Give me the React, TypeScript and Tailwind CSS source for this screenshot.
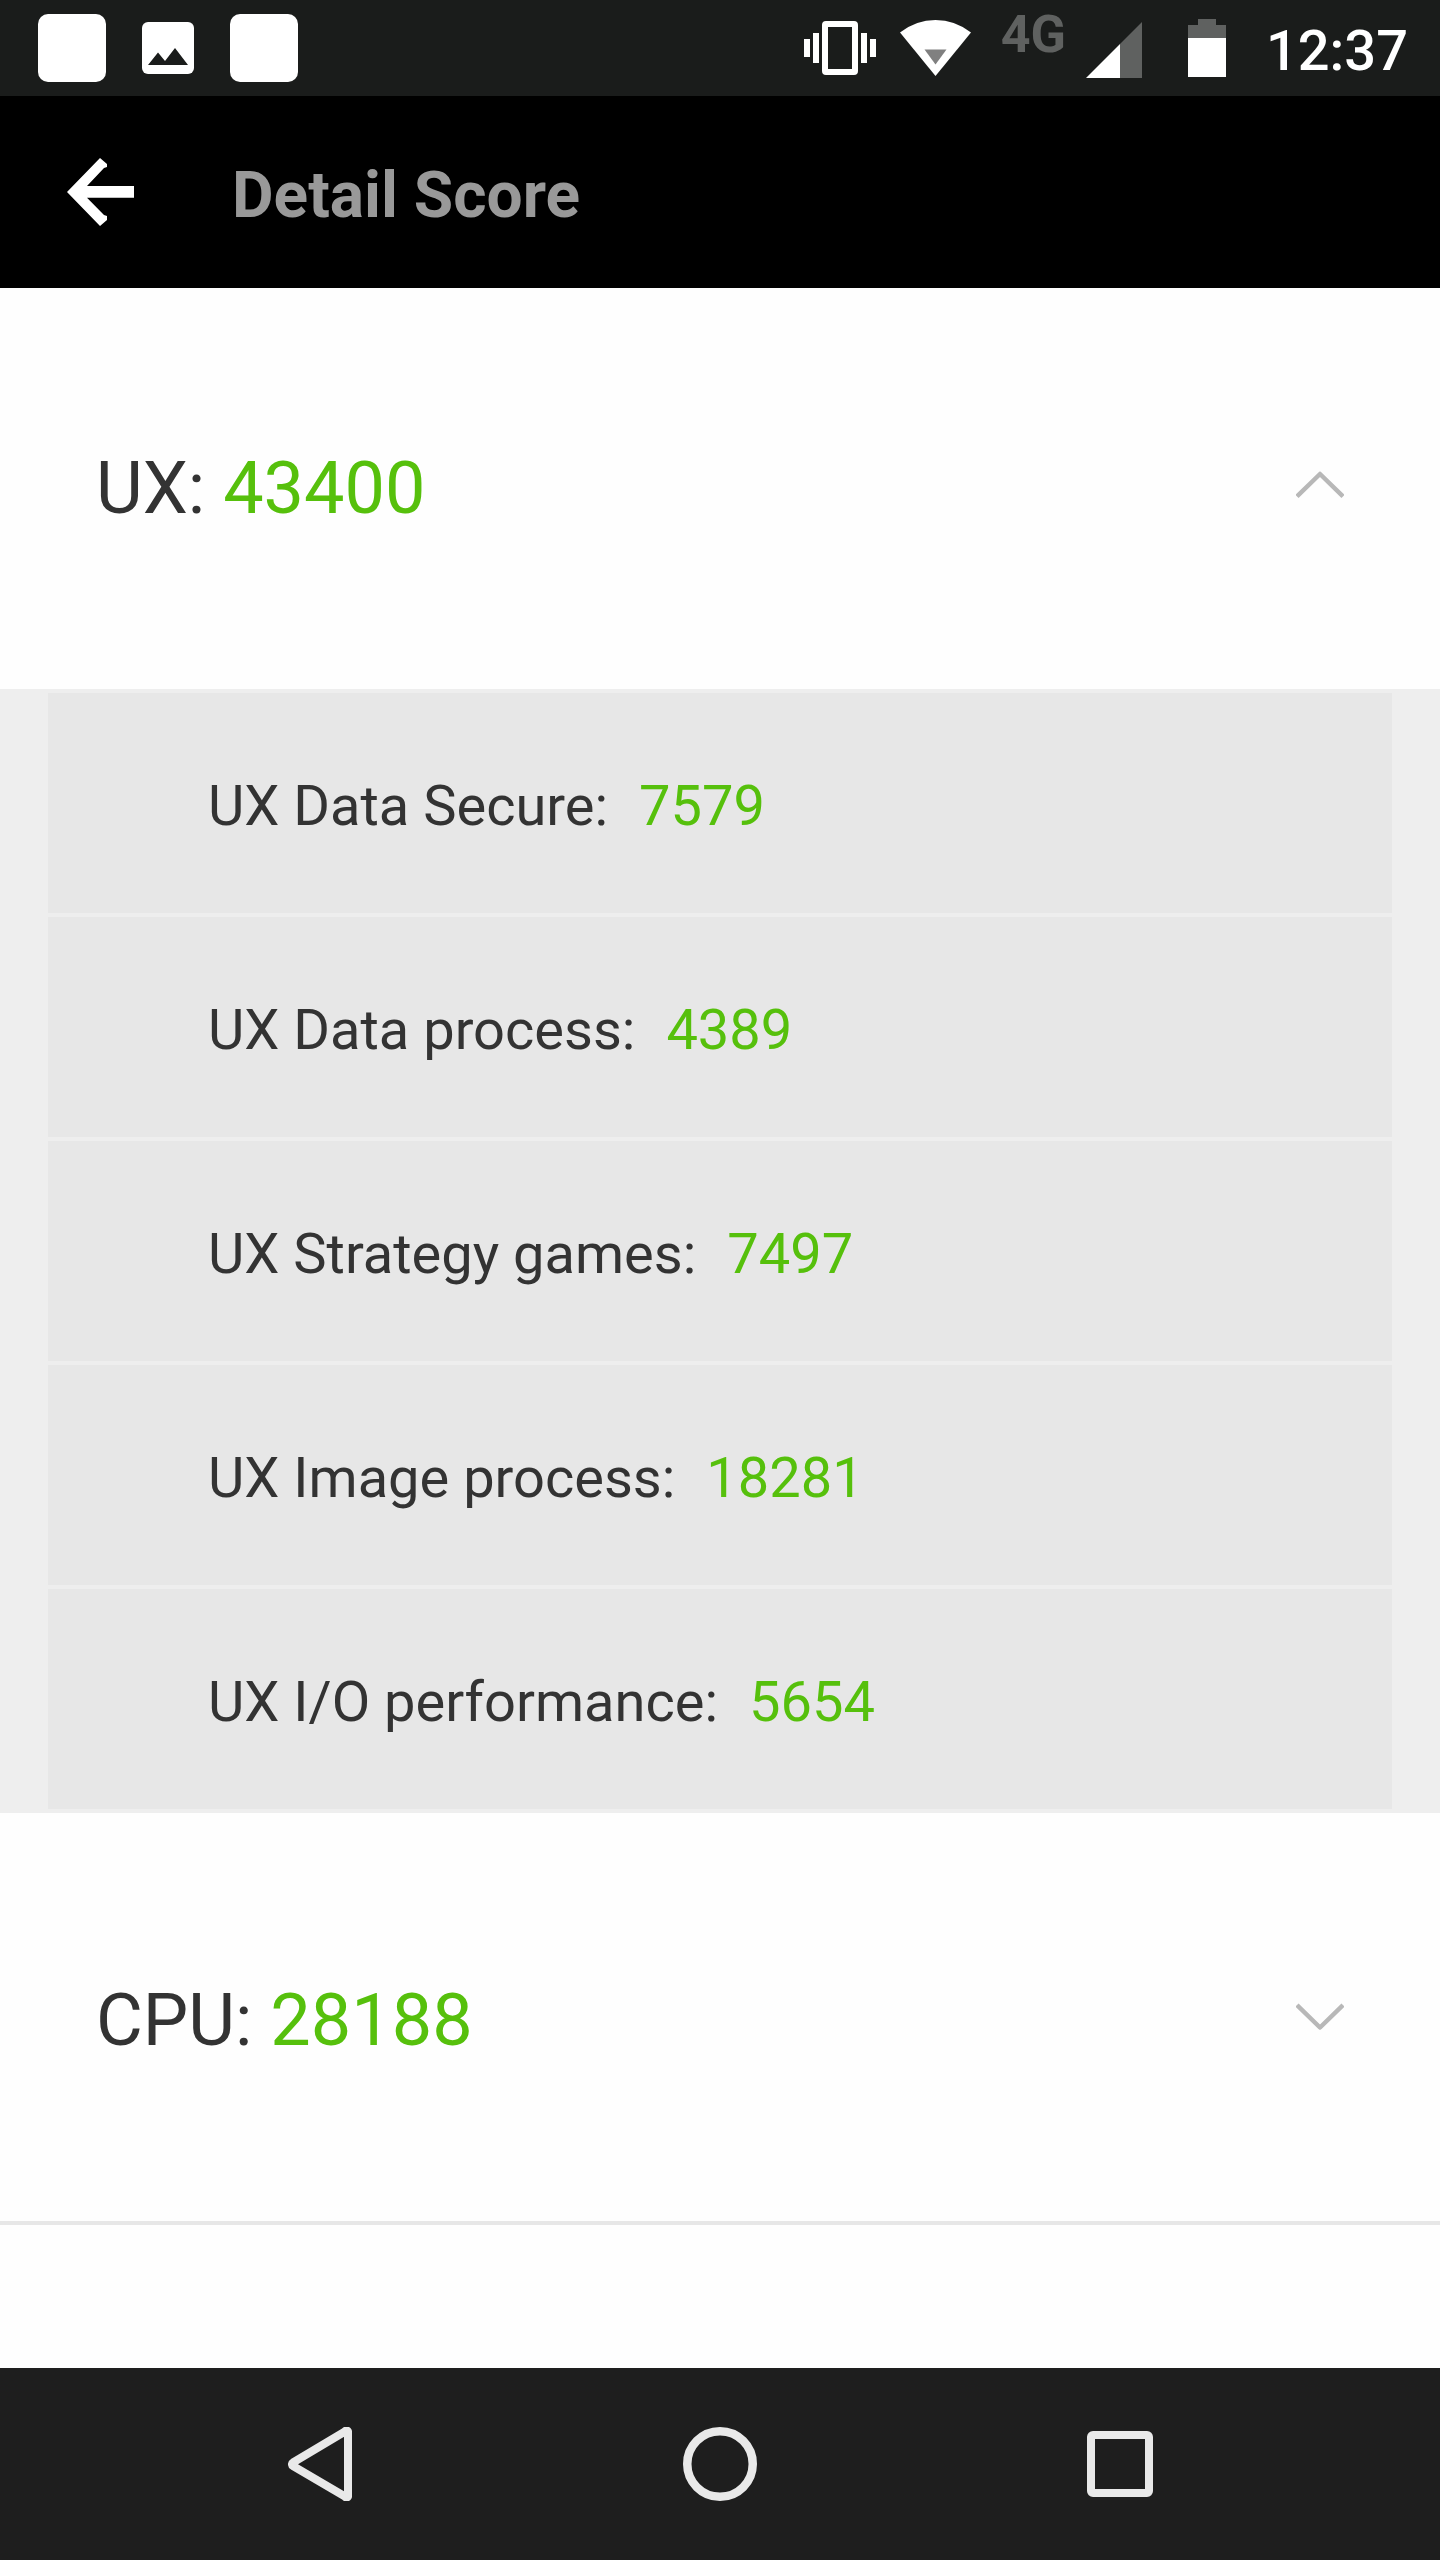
import { useState } from "react";

type Detail = { label: string; value: number };

const uxDetails: Detail[] = [
  { label: "UX Data Secure:", value: 7579 },
  { label: "UX Data process:", value: 4389 },
  { label: "UX Strategy games:", value: 7497 },
  { label: "UX Image process:", value: 18281 },
  { label: "UX I/O performance:", value: 5654 },
];

function Chevron({ up }: { up: boolean }) {
  return (
    <svg width="48" height="28" viewBox="0 0 48 28" fill="none" stroke="#b8b8b8" strokeWidth="4.5" aria-hidden="true">
      <path d={up ? "M1 25.500 24 3 47 25.500" : "M1 2 24 24.500 47 2"} strokeLinejoin="round" />
    </svg>
  );
}

function StatusBar() {
  return (
    <div className="flex h-24 items-center justify-between bg-[#1a1c1b] pr-8 pl-[38px]">
      <div className="flex items-center gap-9">
        <span className="size-[68px] rounded-[10px] bg-white" />
        <svg width="52" height="52" viewBox="0 0 52 52" aria-hidden="true">
          <rect width="52" height="52" rx="6" fill="#fff" />
          <path d="M6 43 16 30.500 23 39 33 26 46 43Z" fill="#1a1c1b" />
        </svg>
        <span className="size-[68px] rounded-[10px] bg-white" />
      </div>
      <div className="flex items-center">
        <svg className="mr-6" width="72" height="54" viewBox="0 0 72 54" fill="#fff" aria-hidden="true">
          <path d="M0 18h6v18H0zM9 12h6v30H9zM57 12h6v30h-6zM66 18h6v18h-6z" />
          <path fillRule="evenodd" d="M22 0h28a4 4 0 0 1 4 4v46a4 4 0 0 1-4 4H22a4 4 0 0 1-4-4V4a4 4 0 0 1 4-4ZM24 6v42h24V6Z" />
        </svg>
        <svg className="mr-[30px]" width="71" height="56" viewBox="0 0 71 56" aria-hidden="true">
          <path d="M0 12.500Q16 0 35.500 0T71 12.500L35.500 56Z" fill="#fff" />
          <path d="M24.500 29.500h22L35.500 44.500Z" fill="#808080" />
        </svg>
        <span className="mr-5 h-24 pt-1 text-[52px] leading-[62px] font-bold text-[#5f6160]">4G</span>
        <svg className="mt-1 mr-[46px]" width="56" height="56" viewBox="0 0 56 56" aria-hidden="true">
          <path d="M34 22 56 0V56H34Z" fill="#5f6160" />
          <path d="M0 56 34 22V56Z" fill="#fff" />
        </svg>
        <svg className="mr-10" width="38" height="58" viewBox="0 0 38 58" aria-hidden="true">
          <path d="M10 0h18v6h10v13H0V6h10Z" fill="#5f6160" />
          <path d="M0 19h38v39H0Z" fill="#fff" />
        </svg>
        <time className="pt-1.5 text-[56px] leading-[64px] font-medium text-white">12:37</time>
      </div>
    </div>
  );
}

function ScoreText({ name, score }: { name: string; score: number }) {
  return (
    <span className="pt-2 text-7xl leading-[84px] text-[#333]">
      {name}: <span className="text-[#56c00c]">{score}</span>
    </span>
  );
}

export default function App() {
  const [uxOpen, setUxOpen] = useState(true);
  const [cpuOpen, setCpuOpen] = useState(false);

  return (
    <div className="flex min-h-screen flex-col bg-[#fefefe] font-[Roboto,sans-serif]">
      <StatusBar />
      <header className="flex h-48 items-center gap-[97px] bg-black pl-[67px]">
        <button type="button" aria-label="Back">
          <svg width="68" height="68" viewBox="0 0 68 68" fill="#fff" aria-hidden="true">
            <path d="M0 34 33 0 40 6V9L37 10 20 28H67V39.700H20L37 57 40 58V62L33 68Z" />
          </svg>
        </button>
        <h1 className="pt-2 text-[64px] leading-[76px] font-bold text-[#999]">Detail Score</h1>
      </header>

      <main>
        <button
          type="button"
          aria-expanded={uxOpen}
          onClick={() => setUxOpen(!uxOpen)}
          className="flex h-[401px] w-full items-center justify-between px-24 pb-2"
        >
          <ScoreText name="UX" score={43400} />
          <Chevron up={uxOpen} />
        </button>
        {uxOpen && (
          <ul className="flex flex-col gap-1 bg-[#eee] px-12 py-1">
            {uxDetails.map((item) => (
              <li
                key={item.label}
                className="flex h-[220px] items-center gap-[31px] bg-[#e7e7e7] px-40 pt-1.5 text-[56px] leading-[66px] text-[#333]"
              >
                <span>{item.label}</span>
                <span className="text-[#56c00c]">{item.value}</span>
              </li>
            ))}
          </ul>
        )}
        <button
          type="button"
          aria-expanded={cpuOpen}
          onClick={() => setCpuOpen(!cpuOpen)}
          className="flex h-[412px] w-full items-center justify-between border-b-4 border-[#e7e7e7] px-24"
        >
          <ScoreText name="CPU" score={28188} />
          <Chevron up={cpuOpen} />
        </button>
      </main>

      <nav className="mt-auto grid h-48 grid-cols-3 bg-[#1e1e1e] px-[120px]">
        <button type="button" aria-label="Back" className="flex items-center justify-center">
          <svg width="64" height="74" viewBox="0 0 64 74" fill="none" stroke="#e9e9e9" strokeWidth="8" aria-hidden="true">
            <path d="M60 5.500a1.500 1.500 0 0 0-3-1L5 35.500a2 2 0 0 0 0 3.500L57 69.500a1.500 1.500 0 0 0 3-1Z" strokeLinejoin="round" />
          </svg>
        </button>
        <button type="button" aria-label="Home" className="flex items-center justify-center">
          <svg width="74" height="74" viewBox="0 0 74 74" fill="none" stroke="#e9e9e9" strokeWidth="8.5" aria-hidden="true">
            <circle cx="37" cy="37" r="32.75" />
          </svg>
        </button>
        <button type="button" aria-label="Recent apps" className="flex items-center justify-center">
          <span className="size-[66px] rounded-md border-8 border-[#e9e9e9]" />
        </button>
      </nav>
    </div>
  );
}
